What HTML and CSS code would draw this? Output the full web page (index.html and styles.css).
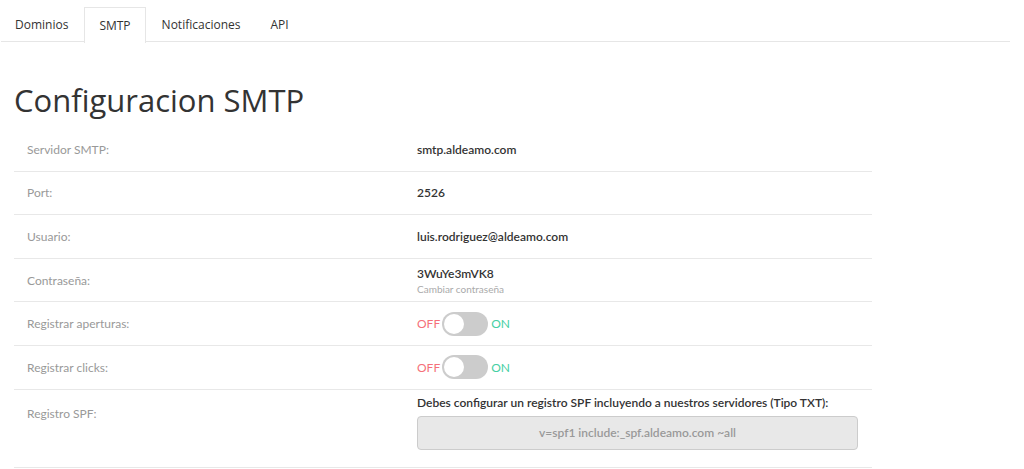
FILE: index.html
```html
<!DOCTYPE html>
<html lang="es">
<head>
<meta charset="utf-8">
<title>Configuracion SMTP</title>
<link rel="stylesheet" href="styles.css">
</head>
<body>
<nav class="tabs">
  <a class="tab">Dominios</a>
  <a class="tab active">SMTP</a>
  <a class="tab">Notificaciones</a>
  <a class="tab">API</a>
</nav>
<main class="content">
  <h1 class="title">Configuracion SMTP</h1>
  <div class="table">
    <div class="row"><div class="label">Servidor SMTP:</div><div class="value">smtp.aldeamo.com</div></div>
    <div class="row"><div class="label">Port:</div><div class="value">2526</div></div>
    <div class="row"><div class="label">Usuario:</div><div class="value">luis.rodriguez@aldeamo.com</div></div>
    <div class="row"><div class="label">Contraseña:</div><div class="value stack"><span>3WuYe3mVK8</span><span class="hint">Cambiar contraseña</span></div></div>
    <div class="row"><div class="label">Registrar aperturas:</div><div class="value switch-line"><span class="off">OFF</span><span class="switch"><span class="knob"></span></span><span class="on">ON</span></div></div>
    <div class="row"><div class="label">Registrar clicks:</div><div class="value switch-line"><span class="off">OFF</span><span class="switch"><span class="knob"></span></span><span class="on">ON</span></div></div>
    <div class="row spf"><div class="label">Registro SPF:</div><div class="value stack"><span>Debes configurar un registro SPF incluyendo a nuestros servidores (Tipo TXT):</span><div class="spf-box">v=spf1 include:_spf.aldeamo.com ~all</div></div></div>
  </div>
</main>
</body>
</html>
```
FILE: styles.css
```css
html, body { margin: 0; padding: 0; background: #fff; }
body { font-family: "Open Sans", sans-serif; color: #333; }

.tabs {
  display: flex;
  margin: 7px 14px 0 1px;
  border-bottom: 1px solid #e6e6e6;
  height: 34px;
}
.tab {
  display: flex;
  align-items: center;
  padding: 0 13px;
  font-size: 12px;
  color: #333;
  border: 1px solid transparent;
  border-bottom: none;
  margin-right: 2px;
}
.tab.active {
  border-color: #e6e6e6;
  background: #fff;
  height: 35px;
  padding: 0 14px;
}

.content { padding: 0 14px; }
.title {
  font-family: "Open Sans", sans-serif;
  font-weight: 400;
  font-size: 31px;
  line-height: 34px;
  margin: 41px 0 11px;
  color: #333;
}

.table { width: 858px; font-family: Lato, sans-serif; font-size: 12px; }
.row {
  display: flex;
  align-items: center;
  height: 42.6px;
  border-bottom: 1px solid #e8e8e8;
}
.label {
  width: 390px;
  padding-left: 13px;
  color: #999;
}
.value { color: #333; font-weight: 600; }
.stack { display: flex; flex-direction: column; }
.hint { font-size: 10px; color: #aaa; font-weight: 400; margin-top: 2px; }

.switch-line { display: flex; align-items: center; font-weight: 400; font-size: 12px; }
.off { color: #f5707a; }
.on { color: #45cfa3; }
.switch {
  width: 46px; height: 24px; border-radius: 12px;
  background: #ccc; margin: 0 3px 0 2px;
  display: flex; align-items: center; padding-left: 2px; box-sizing: border-box;
}
.knob { width: 20px; height: 20px; border-radius: 50%; background: #fff; }

.row.spf { height: 77px; align-items: flex-start; }
.row.spf .label { padding-top: 16px; }
.row.spf .value { padding-top: 5px; }
.spf-box {
  margin-top: 6px;
  width: 441px; height: 34px; box-sizing: border-box;
  background: #e8e8e8; border: 1px solid #ccc; border-radius: 4px;
  display: flex; align-items: center; justify-content: center;
  color: #999; font-weight: 600;
}
```
